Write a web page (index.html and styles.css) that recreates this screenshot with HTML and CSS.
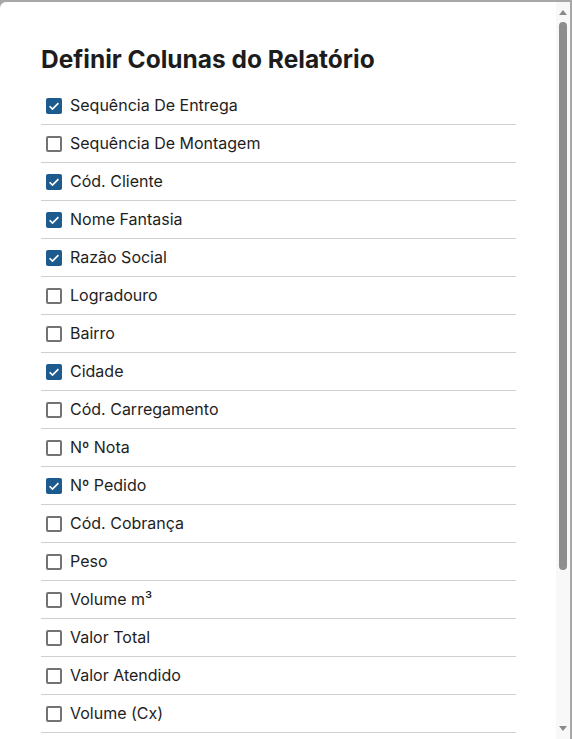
FILE: index.html
```html
<!DOCTYPE html>
<html lang="pt">
<head>
<meta charset="utf-8">
<title>Definir Colunas do Relatório</title>
<link rel="stylesheet" href="styles.css">
</head>
<body>
<div class="dialog">
  <div class="content">
    <h1 class="title">Definir Colunas do Relatório</h1>
    <ul class="list">
      <li class="row"><span class="box checked"><svg viewBox="0 0 16 16"><path d="M3.6 8.2l2.9 2.9 5.9-6"/></svg></span><span class="label">Sequência De Entrega</span></li>
      <li class="row"><span class="box"></span><span class="label">Sequência De Montagem</span></li>
      <li class="row"><span class="box checked"><svg viewBox="0 0 16 16"><path d="M3.6 8.2l2.9 2.9 5.9-6"/></svg></span><span class="label">Cód. Cliente</span></li>
      <li class="row"><span class="box checked"><svg viewBox="0 0 16 16"><path d="M3.6 8.2l2.9 2.9 5.9-6"/></svg></span><span class="label">Nome Fantasia</span></li>
      <li class="row"><span class="box checked"><svg viewBox="0 0 16 16"><path d="M3.6 8.2l2.9 2.9 5.9-6"/></svg></span><span class="label">Razão Social</span></li>
      <li class="row"><span class="box"></span><span class="label">Logradouro</span></li>
      <li class="row"><span class="box"></span><span class="label">Bairro</span></li>
      <li class="row"><span class="box checked"><svg viewBox="0 0 16 16"><path d="M3.6 8.2l2.9 2.9 5.9-6"/></svg></span><span class="label">Cidade</span></li>
      <li class="row"><span class="box"></span><span class="label">Cód. Carregamento</span></li>
      <li class="row"><span class="box"></span><span class="label">Nº Nota</span></li>
      <li class="row"><span class="box checked"><svg viewBox="0 0 16 16"><path d="M3.6 8.2l2.9 2.9 5.9-6"/></svg></span><span class="label">Nº Pedido</span></li>
      <li class="row"><span class="box"></span><span class="label">Cód. Cobrança</span></li>
      <li class="row"><span class="box"></span><span class="label">Peso</span></li>
      <li class="row"><span class="box"></span><span class="label">Volume m³</span></li>
      <li class="row"><span class="box"></span><span class="label">Valor Total</span></li>
      <li class="row"><span class="box"></span><span class="label">Valor Atendido</span></li>
      <li class="row"><span class="box"></span><span class="label">Volume (Cx)</span></li>
    </ul>
  </div>
  <div class="scrollbar">
    <div class="arrow up"></div>
    <div class="track"><div class="thumb"></div></div>
    <div class="arrow down"></div>
  </div>
</div>
</body>
</html>
```
FILE: styles.css
```css
* { box-sizing: border-box; }
html, body { margin: 0; padding: 0; }
body {
  background: #a7a7a7;
  height: 739px;
  overflow: hidden;
  font-family: Inter, "Noto Sans", sans-serif;
  color: #1e1e1e;
}
.dialog {
  margin-top: 2px;
  margin-right: 2px;
  height: 737px;
  background: #fff;
  border-top-left-radius: 6px;
  display: flex;
  overflow: hidden;
}
.content {
  flex: 1;
  padding: 0 40px 0 41px;
}
.title {
  margin: 41px 0 12px;
  font-size: 24.5px;
  line-height: 32px;
  font-weight: 700;
  color: #1c1c1c;
}
.list {
  list-style: none;
  margin: 0;
  padding: 0;
}
.row {
  height: 38px;
  border-bottom: 1px solid #cfcfcf;
  display: flex;
  align-items: center;
  gap: 8px;
  padding-left: 5px;
  font-size: 16px;
}
.label { margin-bottom: 2px; }
.box {
  width: 16px;
  height: 16px;
  border: 2px solid #737373;
  border-radius: 2px;
  flex: none;
  display: flex;
}
.box.checked {
  border: none;
  background: #1d5b8f;
}
.box svg { width: 16px; height: 16px; }
.box path { fill: none; stroke: #fff; stroke-width: 1.6; }
.scrollbar {
  width: 14px;
  background: #f8f8f8;
  display: flex;
  flex-direction: column;
  align-items: center;
  padding: 6px 0 0;
}
.arrow {
  width: 0; height: 0;
  border-left: 4.5px solid transparent;
  border-right: 4.5px solid transparent;
}
.arrow.up { border-bottom: 5px solid #8a8a8a; margin-top: 2px; }
.arrow.down { border-top: 5px solid #8a8a8a; margin-bottom: 8px; }
.track {
  flex: 1;
  width: 100%;
  display: flex;
  justify-content: center;
  padding-top: 7px;
}
.thumb {
  width: 8px;
  height: 548px;
  background: #8d8d8d;
  border-radius: 4px;
}
```
